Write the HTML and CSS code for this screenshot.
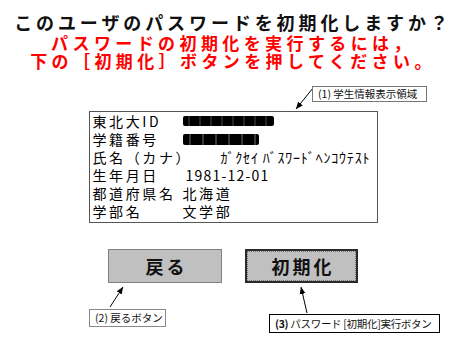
FILE: index.html
```html
<!DOCTYPE html>
<html lang="ja">
  <head>
    <meta charset="utf-8">
    <title>パスワード初期化確認</title>
    <link rel="stylesheet" href="styles.css">
  </head>
  <body>
    <div class="canvas">
      <main class="page">
        <h1 class="question">このユーザのパスワードを初期化しますか？</h1>
        <p class="notice">パスワードの初期化を実行するには，<br>下の［初期化］ボタンを押してください。</p>

        <div class="info">
          <div class="row"><span class="label">東北大ID</span><span class="mask mask1"></span></div>
          <div class="row"><span class="label">学籍番号</span><span class="mask mask2"></span></div>
          <div class="row"><span class="label wide">氏名（カナ）</span><span class="kana">ｶﾞｸｾｲ ﾊﾞｽﾜｰﾄﾞﾍﾝｺｳﾃｽﾄ</span></div>
          <div class="row"><span class="label">生年月日</span><span class="num">1981-12-01</span></div>
          <div class="row"><span class="label">都道府県名</span><span>北海道</span></div>
          <div class="row"><span class="label">学部名</span><span>文学部</span></div>
        </div>

        <div class="buttons">
          <button class="btn back">戻る</button>
          <button class="btn reset">初期化</button>
        </div>
      </main>

      <!-- annotations -->
      <svg class="arrows" width="475" height="354" viewBox="0 0 475 354">
        <defs>
          <marker id="head" markerWidth="8" markerHeight="8" refX="7" refY="4" orient="auto" markerUnits="userSpaceOnUse">
            <path d="M0,1 L7,4 L0,7 Z" fill="#000"/>
          </marker>
        </defs>
        <line x1="313" y1="88" x2="296" y2="109" stroke="#000" stroke-width="1" marker-end="url(#head)"/>
        <line x1="110" y1="307" x2="123" y2="287" stroke="#000" stroke-width="1" marker-end="url(#head)"/>
        <line x1="307" y1="313" x2="301" y2="287" stroke="#000" stroke-width="1" marker-end="url(#head)"/>
      </svg>
      <div class="note note1">(1) 学生情報表示領域</div>
      <div class="note note2">(2) 戻るボタン</div>
      <div class="note note3"><b>(3)</b> パスワード [初期化]実行ボタン</div>
    </div>
  </body>
</html>
```

FILE: styles.css
```css
body {
  margin: 0;
  background: #fff;
  font-family: "Noto Sans CJK JP", "Liberation Sans", sans-serif;
}
.canvas {
  position: relative;
  width: 475px;
  height: 354px;
  overflow: hidden;
}
.page {
  padding-right: 9px;
  padding-top: 11px;
}
.question {
  margin: 0;
  font-size: 18px;
  line-height: 22px;
  font-weight: bold;
  letter-spacing: 3.9px;
  text-align: center;
  color: #111;
}
.notice {
  margin: 1px 0 0;
  font-size: 17px;
  line-height: 18px;
  font-weight: bold;
  letter-spacing: 4.4px;
  text-align: center;
  color: #ff0000;
}
.info {
  width: 287px;
  margin: 41px auto 0;
  border: 1px solid #555;
  padding: 0 0 2px;
  font-size: 14px;
  color: #000;
}
.row {
  display: flex;
  align-items: center;
  height: 18px;
  line-height: 18px;
  padding-left: 3px;
  letter-spacing: 2.6px;
}
.label {
  width: 90px;
  flex: none;
}
.label.wide {
  width: 128px;
}
.kana {
  letter-spacing: 0.8px;
}
.num {
  letter-spacing: 1.2px;
  padding-left: 3px;
}
.mask {
  display: inline-block;
  height: 10px;
  border-radius: 2px;
  background: repeating-linear-gradient(90deg, #000 0 5px, #262626 5px 7px, #000 7px 11px);
  filter: blur(0.5px);
}
.mask1 {
  width: 91px;
}
.mask2 {
  width: 76px;
  height: 11px;
  background: repeating-linear-gradient(90deg, #000 0 6px, #3a3a3a 6px 8px, #000 8px 13px);
}
.buttons {
  display: flex;
  justify-content: center;
  gap: 23px;
  margin-top: 26px;
}
.btn {
  height: 34px;
  background: #c0c0c0;
  font-family: "Noto Sans CJK JP", sans-serif;
  font-size: 18px;
  font-weight: bold;
  letter-spacing: 3px;
  color: #111;
  padding: 0 0 0 3px;
}
.back {
  width: 114px;
  border: 1px solid #808080;
}
.reset {
  width: 113px;
  border: 2px solid #2a2a2a;
  outline: 1px dotted #777;
  outline-offset: -3px;
}
.arrows {
  position: absolute;
  left: 0;
  top: 0;
}
.note {
  position: absolute;
  box-sizing: border-box;
  background: #fff;
  font-size: 10.5px;
  line-height: 14px;
  color: #111;
  white-space: nowrap;
  padding: 0 0 0 5px;
}
.note b {
  font-weight: 600;
}
.note1 {
  left: 312px;
  top: 86px;
  width: 115px;
  height: 16px;
  border: 1px solid #777;
}
.note2 {
  left: 89px;
  top: 309px;
  width: 77px;
  height: 18px;
  border: 1px solid #888;
  padding-top: 1px;
}
.note3 {
  left: 269px;
  top: 314px;
  width: 171px;
  height: 19px;
  border: 1px solid #000;
  padding-top: 2px;
  letter-spacing: -0.3px;
}
```
